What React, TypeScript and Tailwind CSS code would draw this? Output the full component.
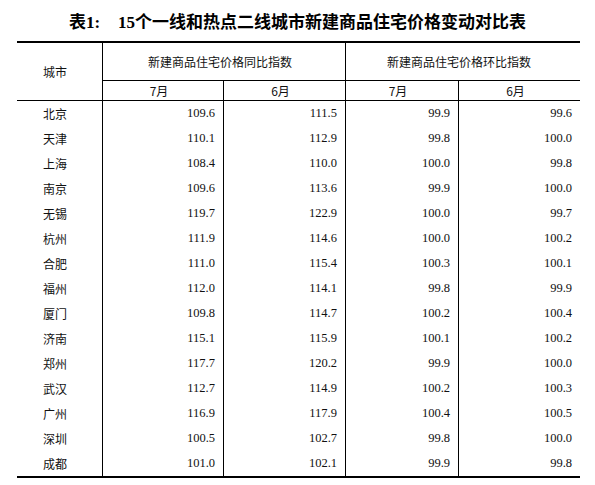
const rows: [string, string, string, string, string][] = [
  ["北京", "109.6", "111.5", "99.9", "99.6"],
  ["天津", "110.1", "112.9", "99.8", "100.0"],
  ["上海", "108.4", "110.0", "100.0", "99.8"],
  ["南京", "109.6", "113.6", "99.9", "100.0"],
  ["无锡", "119.7", "122.9", "100.0", "99.7"],
  ["杭州", "111.9", "114.6", "100.0", "100.2"],
  ["合肥", "111.0", "115.4", "100.3", "100.1"],
  ["福州", "112.0", "114.1", "99.8", "99.9"],
  ["厦门", "109.8", "114.7", "100.2", "100.4"],
  ["济南", "115.1", "115.9", "100.1", "100.2"],
  ["郑州", "117.7", "120.2", "99.9", "100.0"],
  ["武汉", "112.7", "114.9", "100.2", "100.3"],
  ["广州", "116.9", "117.9", "100.4", "100.5"],
  ["深圳", "100.5", "102.7", "99.8", "100.0"],
  ["成都", "101.0", "102.1", "99.9", "99.8"],
];

const cjk = "font-['Noto_Sans_CJK_SC',sans-serif]";
const num = "font-['Liberation_Serif','Times_New_Roman',serif]";

export default function App() {
  return (
    <div className="w-[595px] h-[485px] bg-white text-[#111]">
      <div className="h-[41px] flex items-center justify-center pt-[3px]">
        <h1 className="font-['Liberation_Serif','Noto_Sans_CJK_SC',serif] font-bold text-[17px] leading-none text-black">
          <span>表1:</span>
          <span className="ml-[18px]">15个一线和热点二线城市新建商品住宅价格变动对比表</span>
        </h1>
      </div>

      <div className="ml-[17px] w-[563px] border-t-2 border-b-2 border-black">
        <div className="grid grid-cols-[85px_121px_122px_113px_122px] border-b border-black text-[12px]">
          <div className={`row-span-2 flex items-center pl-[26px] ${cjk}`}>城市</div>
          <div className={`col-span-2 h-[38px] flex items-center justify-center pr-[8px] border-l border-b border-black ${cjk}`}>
            新建商品住宅价格同比指数
          </div>
          <div className={`col-span-2 h-[38px] flex items-center justify-center pr-[8px] border-l border-b border-black ${cjk}`}>
            新建商品住宅价格环比指数
          </div>
          {["7月", "6月", "7月", "6月"].map((m, i) => (
            <div
              key={i}
              className={`h-[19px] flex items-center justify-center pr-[8px] border-l border-black leading-none ${cjk}`}
            >
              {m}
            </div>
          ))}
        </div>

        {rows.map(([city, a, b, c, d]) => (
          <div key={city} className="grid grid-cols-[85px_121px_122px_113px_122px] h-[25px] text-[12px]">
            <div className={`flex items-center pl-[26px] ${cjk}`}>{city}</div>
            {[a, b, c, d].map((v, i) => (
              <div
                key={i}
                className={`flex items-center justify-end pr-[8px] border-l border-black text-[12.5px] ${num}`}
              >
                {v}
              </div>
            ))}
          </div>
        ))}
      </div>
    </div>
  );
}
